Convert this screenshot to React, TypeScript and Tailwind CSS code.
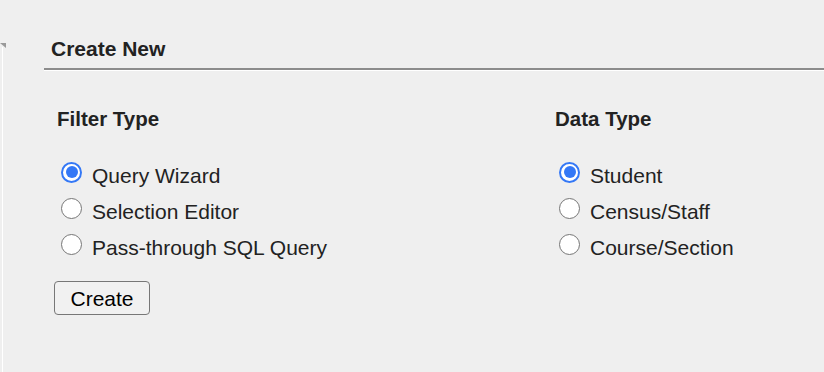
export default function App() {
  const filterTypes = ["Query Wizard", "Selection Editor", "Pass-through SQL Query"];
  const dataTypes = ["Student", "Census/Staff", "Course/Section"];

  return (
    <div className="relative h-[372px] w-[824px] overflow-hidden bg-[#efefef] font-['Liberation_Sans',Arial,sans-serif] text-[#222]">
      {/* splitter edge on the left */}
      <div className="absolute left-0 top-[43px] h-0 w-0 border-l-[6px] border-t-[5px] border-l-transparent border-t-[#999]" />
      <div className="absolute left-[2px] top-[47px] bottom-0 w-px bg-white" />

      <div className="ml-[44px] pt-[37px]">
        <div className="border-b-2 border-[#8c8c8c] pl-[7px] pb-[7px] shadow-[0_1px_0_#fff]">
          <h2 className="text-[21px] font-bold leading-[24px]">Create New</h2>
        </div>

        <div className="flex pl-[13px] pt-[37px]">
          <div className="w-[498px]">
            <RadioGroup title="Filter Type" options={filterTypes} />
            <button className="mt-[15px] ml-[-3px] h-[34px] w-[96px] rounded-[4px] border border-[#777] bg-[#f1f1f1] text-[21px] leading-none text-black">
              Create
            </button>
          </div>
          <div>
            <RadioGroup title="Data Type" options={dataTypes} />
          </div>
        </div>
      </div>
    </div>
  );
}

function RadioGroup({ title, options }: { title: string; options: string[] }) {
  return (
    <div>
      <h3 className="text-[20.5px] font-bold leading-[24px]">{title}</h3>
      <div className="mt-[27px] flex flex-col">
        {options.map((opt, i) => (
          <label key={opt} className="flex h-[36px] items-center gap-[10px] text-[21px]">
            <Radio checked={i === 0} />
            <span>{opt}</span>
          </label>
        ))}
      </div>
    </div>
  );
}

function Radio({ checked }: { checked: boolean }) {
  if (checked) {
    return (
      <span className="ml-[4px] -mt-[8px] flex h-[21px] w-[21px] items-center justify-center rounded-full border-[2px] border-[#3478f6] bg-white">
        <span className="h-[12px] w-[12px] rounded-full bg-[#3478f6]" />
      </span>
    );
  }
  return <span className="ml-[4px] -mt-[8px] h-[21px] w-[21px] rounded-full border border-[#767676] bg-white" />;
}
